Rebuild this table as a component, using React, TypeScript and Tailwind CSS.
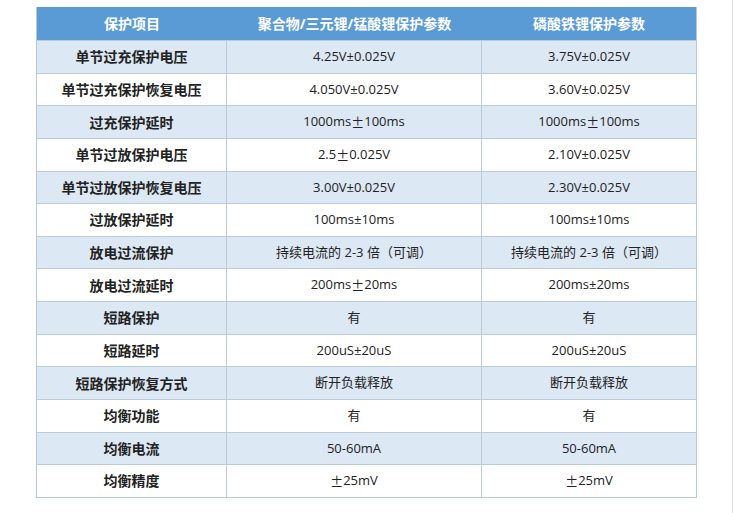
import React from "react";

const W = "§";
const rows: [string, string, string][] = [
  ["单节过充保护电压", "4.25V±0.025V", "3.75V±0.025V"],
  ["单节过充保护恢复电压", "4.050V±0.025V", "3.60V±0.025V"],
  ["过充保护延时", "1000ms§100ms", "1000ms§100ms"],
  ["单节过放保护电压", "2.5§0.025V", "2.10V±0.025V"],
  ["单节过放保护恢复电压", "3.00V±0.025V", "2.30V±0.025V"],
  ["过放保护延时", "100ms±10ms", "100ms±10ms"],
  ["放电过流保护", "持续电流的 2-3 倍（可调）", "持续电流的 2-3 倍（可调）"],
  ["放电过流延时", "200ms§20ms", "200ms±20ms"],
  ["短路保护", "有", "有"],
  ["短路延时", "200uS±20uS", "200uS±20uS"],
  ["短路保护恢复方式", "断开负载释放", "断开负载释放"],
  ["均衡功能", "有", "有"],
  ["均衡电流", "50-60mA", "50-60mA"],
  ["均衡精度", "§25mV", "§25mV"],
];

function Val({ t }: { t: string }) {
  const parts = t.split(W);
  if (parts.length === 1) return <>{t}</>;
  return (
    <>
      {parts[0]}
      <span style={{ fontFamily: '"Noto Sans CJK SC", sans-serif' }}>±</span>
      {parts[1]}
    </>
  );
}

export default function App() {
  return (
    <div
      className="w-[734px] h-[513px] bg-white"
      style={{ fontFamily: '"Open Sans", "Noto Sans CJK SC", sans-serif' }}
    >
      <div className="w-[733px] h-[513px] border-r border-[#e6e6e6] pt-[7px] pl-[36px]">
        <div className="w-[661px] border border-[#b9c7d6] border-t-0">
          <div className="grid grid-cols-[190px_255px_214px] h-[33px] bg-[#5b9bd5] text-white text-[14px] font-bold items-center text-center">
            <div>保护项目</div>
            <div>聚合物/三元锂/锰酸锂保护参数</div>
            <div>磷酸铁锂保护参数</div>
          </div>
          {rows.map((r, i) => (
            <div
              key={i}
              className={
                "grid grid-cols-[190px_255px_214px] h-[32.64px] text-[13px] text-[#222] text-center border-t border-[#bccbda] " +
                (i % 2 === 0 ? "bg-[#dde8f5]" : "bg-white")
              }
            >
              <div className="flex items-center justify-center text-[14px] font-bold border-r border-[#bccbda]">
                {r[0]}
              </div>
              <div className="flex items-center justify-center border-r border-[#bccbda]">
                <Val t={r[1]} />
              </div>
              <div className="flex items-center justify-center">
                <Val t={r[2]} />
              </div>
            </div>
          ))}
        </div>
      </div>
    </div>
  );
}
